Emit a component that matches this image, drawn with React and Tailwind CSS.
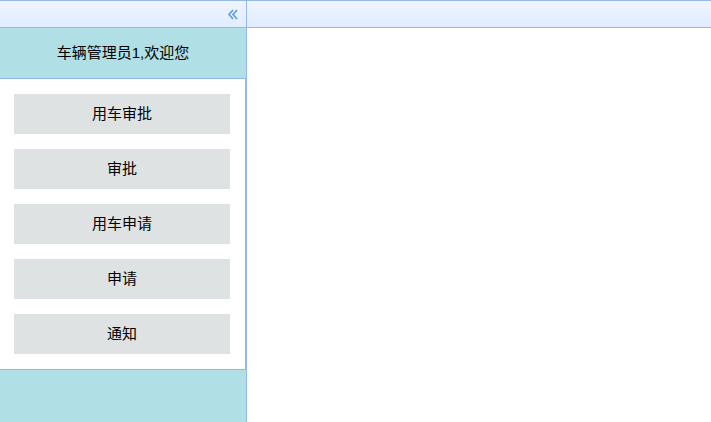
import React from "react";

const menuItems = ["用车审批", "审批", "用车申请", "申请", "通知"];

function CollapseIcon() {
  return (
    <svg width="10" height="11" viewBox="0 0 10 11" fill="none">
      <path d="M5 1 L1 5.5 L5 10" stroke="#5b9be0" strokeWidth="1.6" />
      <path d="M9 1 L5 5.5 L9 10" stroke="#5b9be0" strokeWidth="1.6" />
    </svg>
  );
}

export default function App() {
  return (
    <div
      className="flex h-[422px] w-[711px] bg-white text-black"
      style={{ fontFamily: '"Liberation Sans", "Noto Sans CJK SC", sans-serif' }}
    >
      <div className="flex w-[247px] flex-col border-r border-[#95b8e7]">
        <div className="flex h-[28px] items-center justify-end border-y border-[#95b8e7] bg-gradient-to-b from-[#eff5ff] to-[#e0ecff] pr-[8px]">
          <CollapseIcon />
        </div>
        <div className="flex flex-1 flex-col bg-[#b0dfe5]">
          <div className="flex h-[50px] items-center justify-center text-[15px]">
            车辆管理员1,欢迎您
          </div>
          <div className="flex flex-col gap-[15px] border-y border-r border-[#95b8e7] bg-white py-[15px] pl-[14px] pr-[15px]">
            {menuItems.map((item) => (
              <div
                key={item}
                className="flex h-[40px] items-center justify-center bg-[#dfe2e2] text-[15px]"
              >
                {item}
              </div>
            ))}
          </div>
        </div>
      </div>
      <div className="flex flex-1 flex-col">
        <div className="h-[28px] border-y border-[#95b8e7] bg-gradient-to-b from-[#eff5ff] to-[#e0ecff]" />
        <div className="flex-1 bg-white" />
      </div>
    </div>
  );
}
